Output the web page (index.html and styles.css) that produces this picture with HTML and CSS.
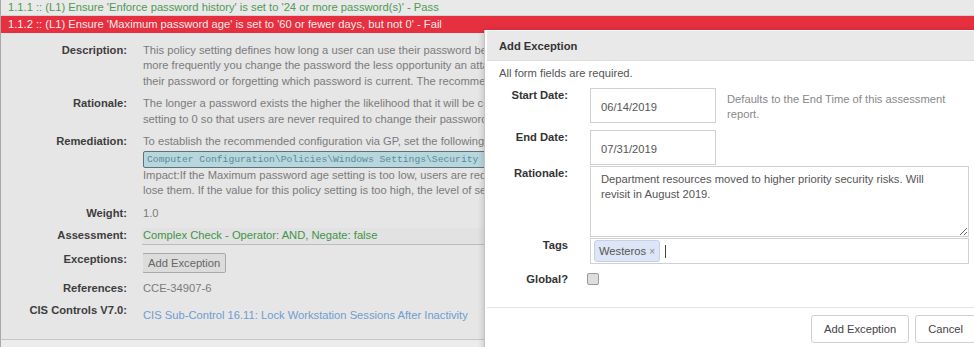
FILE: index.html
```html
<!DOCTYPE html>
<html lang="en">
<head>
  <meta charset="UTF-8" />
  <title>Assessment report - Add Exception</title>
  <link rel="stylesheet" href="styles.css">
</head>
<body>
  <div class="rule rule-pass">1.1.1 :: (L1) Ensure 'Enforce password history' is set to '24 or more password(s)' - Pass</div>
  <div class="rule rule-fail">1.1.2 :: (L1) Ensure 'Maximum password age' is set to '60 or fewer days, but not 0' - Fail</div>

  <div class="details">
    <div class="row">
      <div class="label">Description:</div>
      <div class="value">
        This policy setting defines how long a user can use their password before it expires. Values for this policy setting range from 0 to 999 days. If you set the value to 0, the password will never expire. Because attackers can crack passwords, the<br />
        more frequently you change the password the less opportunity an attacker has to use a cracked password. However, the lower this value is set, the higher the potential for an increase in calls to help desk support due to users having to change<br />
        their password or forgetting which password is current. The recommended state for this setting is 60 or fewer days, but not 0.
      </div>
    </div>
    <div class="row">
      <div class="label">Rationale:</div>
      <div class="value">
        The longer a password exists the higher the likelihood that it will be compromised by a brute force attack, by an attacker gaining general knowledge about the user, or by the user sharing the password. Configuring the Maximum password age<br />
        setting to 0 so that users are never required to change their passwords is a major security risk because that allows a compromised password to be used by the malicious user for as long as the valid user has authorized access.
      </div>
    </div>
    <div class="row">
      <div class="label">Remediation:</div>
      <div class="value">
        To establish the recommended configuration via GP, set the following UI path to 60 or fewer, but not 0:
        <div class="code">Computer Configuration\Policies\Windows Settings\Security Settings\Account Policies\Password Policy\Maximum password age</div>
        Impact:If the Maximum password age setting is too low, users are required to change their passwords very often. Such a configuration can reduce security in the organization, because users might write their passwords in an insecure location or<br />
        lose them. If the value for this policy setting is too high, the level of security within an organization is reduced because it allows potential attackers more time in which to discover user passwords or to use compromised accounts.
      </div>
    </div>
    <div class="row">
      <div class="label">Weight:</div>
      <div class="value">1.0</div>
    </div>
    <div class="row">
      <div class="label">Assessment:</div>
      <div class="value assessment">Complex Check - Operator: AND, Negate: false</div>
    </div>
    <div class="row">
      <div class="label">Exceptions:</div>
      <div class="value"><button class="small-btn">Add Exception</button></div>
    </div>
    <div class="row">
      <div class="label">References:</div>
      <div class="value">CCE-34907-6</div>
    </div>
    <div class="row">
      <div class="label">CIS Controls V7.0:</div>
      <div class="value controls"><a href="#">CIS Sub-Control 16.11: Lock Workstation Sessions After Inactivity</a></div>
    </div>
  </div>
  <div class="rule rule-next"></div>

  <!-- Add Exception dialog -->
  <div class="modal">
    <div class="modal-header">Add Exception</div>
    <div class="modal-body">
      <p class="note">All form fields are required.</p>

      <div class="field">
        <label>Start Date:</label>
        <input class="date" type="text" value="06/14/2019" />
        <span class="help">Defaults to the End Time of this assessment report.</span>
      </div>
      <div class="field field-end">
        <label>End Date:</label>
        <input class="date" type="text" value="07/31/2019" />
      </div>
      <div class="field field-rationale">
        <label>Rationale:</label>
        <textarea>Department resources moved to higher priority security risks. Will revisit in August 2019.</textarea>
      </div>
      <div class="field field-tags">
        <label>Tags</label>
        <div class="tags">
          <span class="tag">Westeros <span class="tag-x">×</span></span>
          <span class="caret"></span>
        </div>
      </div>
      <div class="field field-global">
        <label>Global?</label>
        <input class="check" type="checkbox" />
      </div>
    </div>
    <div class="modal-footer">
      <button>Add Exception</button>
      <button>Cancel</button>
    </div>
  </div>
</body>
</html>
```

FILE: styles.css
```css
html, body {
  overflow: hidden;
}
body {
  margin: 0;
  font-family: 'Liberation Sans', Arial, sans-serif;
  font-size: 11.2px;
  background: #e6e6e6;
  color: #7b7b7b;
  position: relative;
  height: 347px;
}

/* rule rows */
.rule {
  padding-left: 7px;
  white-space: nowrap;
  border-left: 1px solid #a8a8a8;
}
.rule-pass {
  background: #e9e9e9;
  color: #4f9a55;
  line-height: 15px;
  border-bottom: 1px solid #d2d2d2;
}
.rule-fail {
  background: #e6303f;
  color: #fde9eb;
  line-height: 17px;
}
.rule-next {
  background: #ececec;
  height: 20px;
}

/* details of the failed rule */
.details {
  border-left: 1px solid #a8a8a8;
  border-bottom: 1px solid #c6c6c6;
  padding: 6px 0 12px;
}
.row {
  display: grid;
  grid-template-columns: 126px minmax(0, 1fr);
  column-gap: 16px;
  padding: 3.5px 0;
  line-height: 15.5px;
}
.label {
  text-align: right;
  font-weight: bold;
  color: #3d3d3d;
  white-space: nowrap;
}
.value {
  white-space: nowrap;
  overflow: hidden;
}
.code {
  margin-top: 1px;
  height: 13px;
  line-height: 13px;
  padding: 1px 3px;
  background: #b8d6dd;
  border: 1px solid #5c7479;
  border-radius: 2px;
  font-family: 'Liberation Mono', 'Courier New', monospace;
  font-size: 9.7px;
  color: #5a8b97;
}
.assessment {
  background: #e2e2e2;
  border-bottom: 1px solid #bcbcbc;
  color: #3f9448;
  padding-left: 1px;
  margin-left: -1px;
}
.small-btn {
  font-family: inherit;
  font-size: 11.2px;
  color: #666;
  background: #dcdcdc;
  border: 1px solid #a9a9a9;
  border-radius: 2px;
  height: 20px;
  padding: 0 5px;
  margin: 1px 0 1px -1px;
}
.controls {
  padding-top: 5px;
}
.controls a {
  color: #6f9dce;
  text-decoration: none;
}

/* dialog */
.modal {
  position: absolute;
  left: 484px;
  top: 30px;
  width: 497px;
  height: 330px;
  padding: 1px 0 0 2px;
  background: #fff;
  border-left: 1px solid #c4c4c4;
  box-shadow: -2px 0 5px rgba(0,0,0,0.12);
  color: #555;
}
.modal-header {
  height: 29px;
  line-height: 30px;
  padding-left: 12px;
  background: #e9e9e9;
  border-bottom: 1px solid #dadada;
  font-weight: bold;
  color: #333;
}
.modal-body {
  padding: 5px 15px 20px 12px;
}
.note {
  margin: 0 0 7px;
  line-height: 15px;
}
.field {
  display: flex;
  align-items: flex-start;
  line-height: 15px;
}
.field label {
  width: 69px;
  margin-right: 22px;
  flex-shrink: 0;
  text-align: right;
  font-weight: bold;
  color: #333;
}
.field-end {
  margin-top: 7px;
}
.field-rationale {
  margin-top: 1px;
}
.field-tags {
  margin-top: 1px;
}
.field-global {
  margin-top: 8px;
}
input.date, textarea {
  font-family: inherit;
  font-size: 11.2px;
  color: #555;
  border: 1px solid #d0d0d0;
  box-sizing: border-box;
  margin: 0;
}
input.date {
  width: 126px;
  height: 35px;
  padding: 2px 10px 0;
}
.help {
  width: 235px;
  margin-left: 11px;
  padding-top: 4px;
  color: #888;
}
textarea {
  width: 379px;
  height: 71px;
  padding: 5px 16px 5px 10px;
  line-height: 15px;
  resize: vertical;
}
.tags {
  width: 379px;
  height: 26px;
  box-sizing: border-box;
  border: 1px solid #d0d0d0;
  padding: 1px 3px;
  display: flex;
  align-items: center;
  gap: 5px;
}
.tag {
  height: 20px;
  line-height: 20px;
  padding: 0 4px;
  background: #dde6f6;
  border: 1px solid #c3d1ea;
  border-radius: 3px;
  color: #555;
}
.tag-x {
  color: #888;
  font-size: 10px;
}
.caret {
  width: 1px;
  height: 13px;
  background: #444;
}
.check {
  appearance: none;
  width: 12px;
  height: 12px;
  margin: 1px 0 0 -3px;
  background: #dedede;
  border: 1px solid #9a9a9a;
  border-radius: 2px;
}
.modal-footer {
  border-top: 1px solid #e3e3e3;
  padding: 7px 8px;
  display: flex;
  justify-content: flex-end;
  gap: 6px;
}
.modal-footer button {
  font-family: inherit;
  font-size: 11.2px;
  color: #444;
  background: #fff;
  border: 1px solid #cfcfcf;
  border-radius: 3px;
  height: 28px;
  padding: 0 12px;
}
```
